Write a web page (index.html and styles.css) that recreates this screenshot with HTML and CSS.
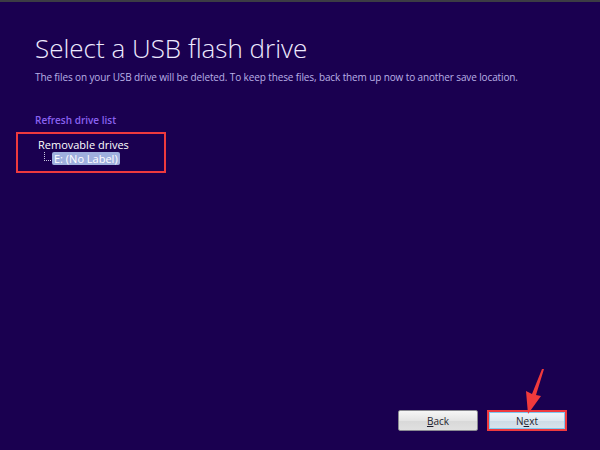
FILE: index.html
```html
<!doctype html>
<html>
    <head>
        <title>Select a USB flash drive</title>
        <meta charset="UTF-8">
        <link rel="stylesheet" href="styles.css">
    </head>

    <body>
        <div class="page">
            <!--Header Start-->
            <header class="head">
                <h1 class="title">Select a USB flash drive</h1>
                <p class="note">The files on your USB drive will be deleted. To keep these files, back them up now to another save location.</p>
            </header>
            <!--Header End-->

            <!--Drives Start-->
            <section class="drives">
                <a class="refresh">Refresh drive list</a>
                <div class="mark tree">
                    <div class="group">Removable drives</div>
                    <div class="leaf">
                        <span class="branch"></span>
                        <span class="item">E: (No Label)</span>
                    </div>
                </div>
            </section>
            <!--Drives End-->

            <!--Buttons Start-->
            <footer class="foot">
                <button class="btn"><u>B</u>ack</button>
                <div class="mark next-wrap">
                    <button class="btn next">N<u>e</u>xt</button>
                    <svg class="arrow" width="24" height="46" viewBox="0 0 24 46">
                        <path d="M21 0 L13 26 L18 27 L5 45 L3 22 L9 25 L19 0 Z" fill="#f03a3c"/>
                    </svg>
                </div>
            </footer>
            <!--Buttons End-->
        </div>
    </body>
</html>
```

FILE: styles.css
```css
body{
    box-sizing: border-box;
    padding: 0;
    margin: 0;
    font-family: "Open Sans", "Noto Sans", sans-serif;
    background: #1a0050;
    border-top: 2px solid #3c3c44;
    height: 100vh;
    overflow: hidden;
}

.page{
    display: flex;
    flex-direction: column;
    height: 100%;
    padding: 0 0 19px;
    box-sizing: border-box;
}

/* Header */
.head{
    padding: 30px 0 0 35px;
}
.head .title{
    margin: 0;
    color: #eeeaff;
    font-weight: 300;
    font-size: 26px;
    line-height: 32px;
}
.head .note{
    margin: 6px 0 0;
    color: #b9b0e6;
    font-size: 10px;
    line-height: 14px;
    letter-spacing: -0.12px;
}

/* Drives */
.drives{
    padding: 29px 0 0 16px;
}
.drives .refresh{
    display: block;
    margin-left: 19px;
    color: #8a62f0;
    font-size: 10px;
    font-weight: 600;
    line-height: 14px;
}
.mark{
    border: 2px solid #ee3a3e;
}
.tree{
    margin-top: 5px;
    padding: 4px 0 0 20px;
    box-sizing: border-box;
    width: 150px;
    height: 41px;
}
.tree .group{
    color: #ffffff;
    font-size: 11px;
    line-height: 14px;
}
.tree .leaf{
    display: flex;
    align-items: flex-end;
    margin-left: 6px;
}
.tree .branch{
    width: 6px;
    height: 8px;
    border-left: 1px dotted #c8c8e0;
    border-bottom: 1px dotted #c8c8e0;
    margin-bottom: 4px;
}
.tree .item{
    margin-left: 1px;
    padding: 0 2px;
    background: #9fb0de;
    color: #ffffff;
    font-size: 11px;
    line-height: 13px;
    border-radius: 2px;
}

/* Buttons */
.foot{
    margin-top: auto;
    display: flex;
    justify-content: flex-end;
    align-items: center;
    gap: 9px;
    padding-right: 33px;
}
.btn{
    width: 80px;
    height: 21px;
    padding: 0;
    font-family: "Open Sans", sans-serif;
    font-size: 10px;
    color: #1e1e2e;
    border: 1px solid #8a8a92;
    border-radius: 2px;
    background: linear-gradient(#f6f6f6, #e4e4e4 50%, #d8d8d8 51%, #e0e0e0);
}
.next-wrap{
    position: relative;
    line-height: 0;
}
.btn.next{
    width: 76px;
    height: 17px;
    border: 1px solid #7ec8f0;
    border-radius: 0;
    background: linear-gradient(#eef4f8, #dde8f0 50%, #cddbe6 51%, #d8e4ec);
}
.arrow{
    position: absolute;
    left: 34px;
    top: -43px;
}
```
